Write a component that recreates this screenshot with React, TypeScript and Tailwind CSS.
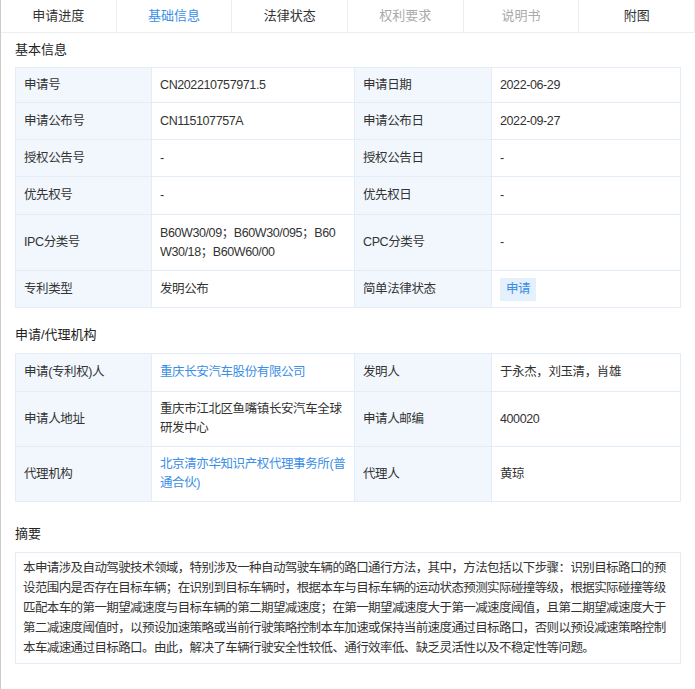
const F = { fontFamily: '"Liberation Sans", "Noto Sans CJK SC", sans-serif' };

type Cell = { t: string; link?: boolean; tag?: boolean };
const L = 'bg-[#f1f7fd] px-2 text-[#333] border-r border-b border-[#e3edf7] flex items-center';
const V = 'bg-white px-2 text-[#333] border-r border-b border-[#e3edf7] flex items-center break-all';

function Val({ c }: { c: Cell }) {
  if (c.tag) return <span className="bg-[#e4f1fd] text-[#3a8ee6] px-1.5 py-0.5">{c.t}</span>;
  return <span className={c.link ? 'text-[#3a8ee6]' : ''}>{c.t}</span>;
}

function Table({ rows }: { rows: { h: string; c: [string, Cell, string, Cell] }[] }) {
  return (
    <div className="mx-[14px] border-l border-t border-[#e3edf7] grid grid-cols-[136px_203px_137px_1fr] text-[12.5px] leading-[19px] tracking-[-0.4px]">
      {rows.map((r, i) => (
        <div key={i} className="contents">
          <div className={`${L} ${r.h}`}>{r.c[0]}</div>
          <div className={`${V} ${r.h}`}><Val c={r.c[1]} /></div>
          <div className={`${L} ${r.h}`}>{r.c[2]}</div>
          <div className={`${V} ${r.h}`}><Val c={r.c[3]} /></div>
        </div>
      ))}
    </div>
  );
}

export default function App() {
  const tabs = ['申请进度', '基础信息', '法律状态', '权利要求', '说明书', '附图'];
  return (
    <div style={F} className="w-[695px] h-[689px] bg-white border-l border-[#ccc] overflow-hidden">
      <div className="flex h-[33px] border-b border-[#eee]">
        {tabs.map((t, i) => (
          <div key={t} className={`flex-1 flex items-center justify-center text-[13px] border-r border-[#eee] ${i === 1 ? 'text-[#3a8ee6]' : i === 3 || i === 4 ? 'text-[#aaa]' : 'text-[#333]'}`}>{t}</div>
        ))}
      </div>
      <div className="px-[14px] h-[34px] flex items-center text-[13px] text-[#222]">基本信息</div>
      <Table rows={[
        { h: 'h-[35px]', c: ['申请号', { t: 'CN202210757971.5' }, '申请日期', { t: '2022-06-29' }] },
        { h: 'h-[37px]', c: ['申请公布号', { t: 'CN115107757A' }, '申请公布日', { t: '2022-09-27' }] },
        { h: 'h-[37px]', c: ['授权公告号', { t: '-' }, '授权公告日', { t: '-' }] },
        { h: 'h-[38px]', c: ['优先权号', { t: '-' }, '优先权日', { t: '-' }] },
        { h: 'h-[56px]', c: ['IPC分类号', { t: 'B60W30/09；B60W30/095；B60W30/18；B60W60/00' }, 'CPC分类号', { t: '-' }] },
        { h: 'h-[37px]', c: ['专利类型', { t: '发明公布' }, '简单法律状态', { t: '申请', tag: true }] },
      ]} />
      <div className="px-[14px] h-[45px] pt-[8px] flex items-center text-[13px] text-[#222]">申请/代理机构</div>
      <Table rows={[
        { h: 'h-[38px]', c: ['申请(专利权)人', { t: '重庆长安汽车股份有限公司', link: true }, '发明人', { t: '于永杰，刘玉清，肖雄' }] },
        { h: 'h-[55px]', c: ['申请人地址', { t: '重庆市江北区鱼嘴镇长安汽车全球研发中心' }, '申请人邮编', { t: '400020' }] },
        { h: 'h-[55px]', c: ['代理机构', { t: '北京清亦华知识产权代理事务所(普通合伙)', link: true }, '代理人', { t: '黄琼' }] },
      ]} />
      <div className="px-[14px] h-[50px] pt-[14px] flex items-center text-[13px] text-[#222]">摘要</div>
      <div className="mx-[14px] border border-[#e3edf7] px-[7px] py-[5px] text-[12.5px] leading-[20px] tracking-[-0.6px] text-[#333] break-all">
        本申请涉及自动驾驶技术领域，特别涉及一种自动驾驶车辆的路口通行方法，其中，方法包括以下步骤：识别目标路口的预设范围内是否存在目标车辆；在识别到目标车辆时，根据本车与目标车辆的运动状态预测实际碰撞等级，根据实际碰撞等级匹配本车的第一期望减速度与目标车辆的第二期望减速度；在第一期望减速度大于第一减速度阈值，且第二期望减速度大于第二减速度阈值时，以预设加速策略或当前行驶策略控制本车加速或保持当前速度通过目标路口，否则以预设减速策略控制本车减速通过目标路口。由此，解决了车辆行驶安全性较低、通行效率低、缺乏灵活性以及不稳定性等问题。
      </div>
    </div>
  );
}
